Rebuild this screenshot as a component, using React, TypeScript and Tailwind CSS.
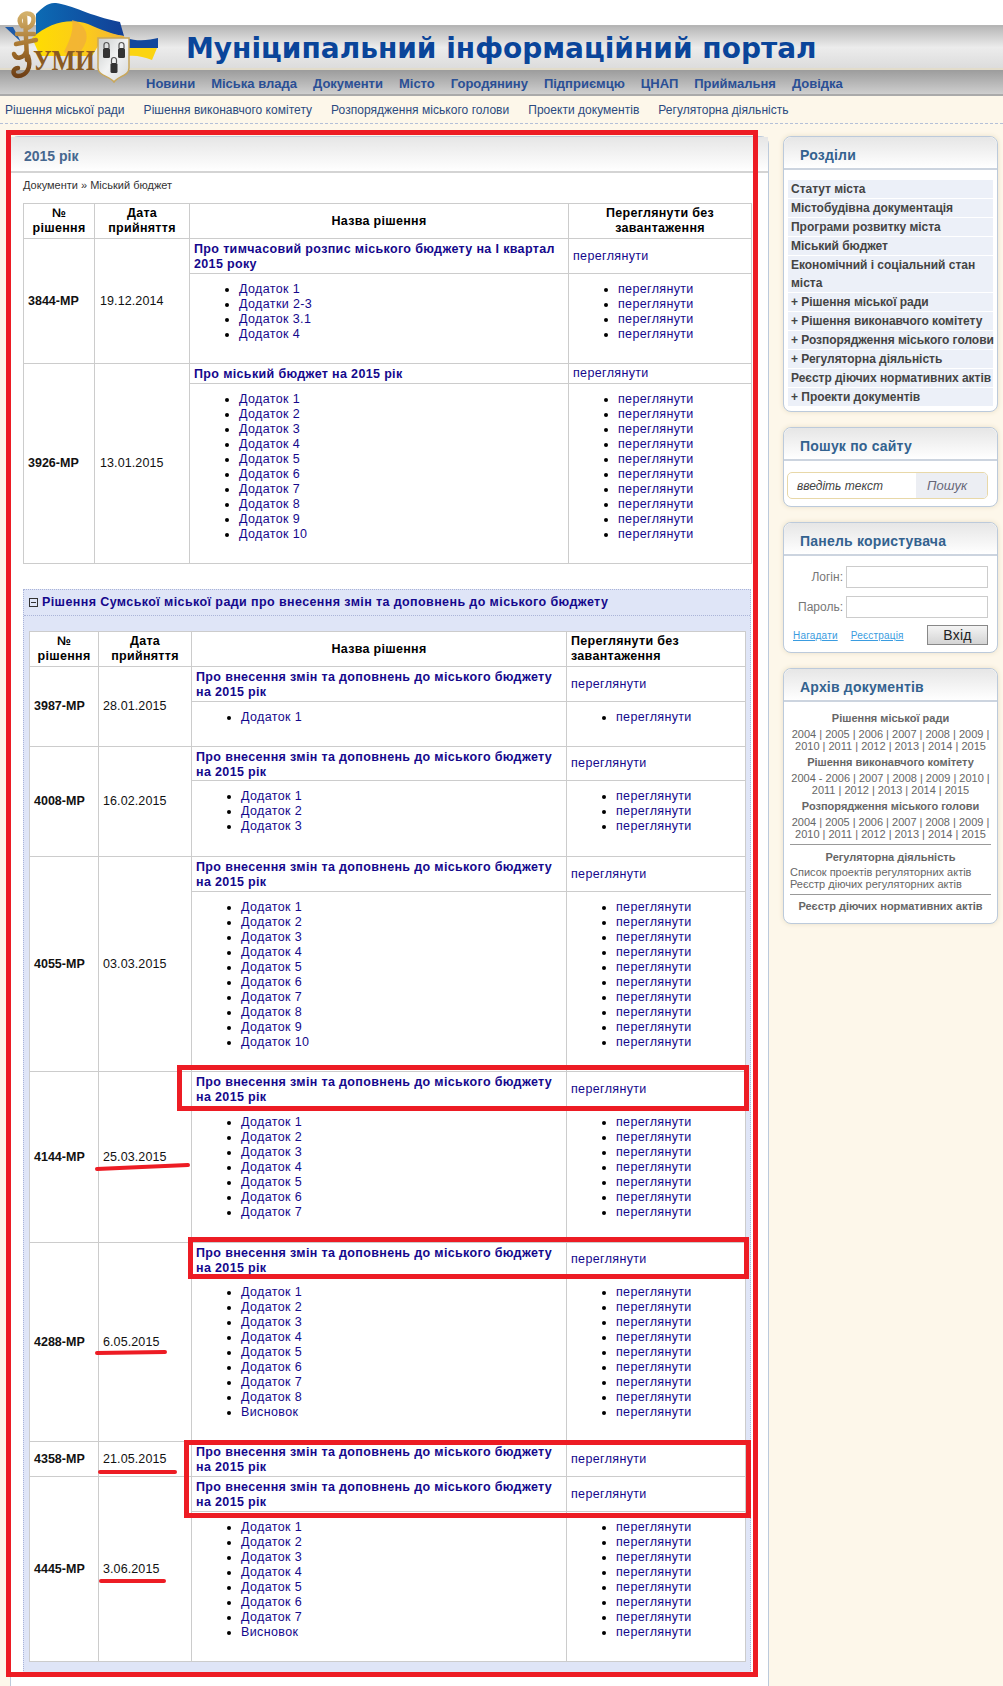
import React from "react";

const addons = (n: number) => Array.from({ length: n }, (_, i) => `Додаток ${i + 1}`);
const TITLE = "Про внесення змін та доповнень до міського бюджету на 2015 рік";

type Row = {
  no: string;
  date: string;
  title: string;
  titleH: number;
  subH?: number;
  items?: string[];
};

const budgetRows: Row[] = [
  {
    no: "3844-МР",
    date: "19.12.2014",
    title: "Про тимчасовий розпис міського бюджету на I квартал 2015 року",
    titleH: 35,
    subH: 90,
    items: ["Додаток 1", "Додатки 2-3", "Додаток 3.1", "Додаток 4"],
  },
  { no: "3926-МР", date: "13.01.2015", title: "Про міський бюджет на 2015 рік", titleH: 20, subH: 180, items: addons(10) },
];

const changeRows: Row[] = [
  { no: "3987-МР", date: "28.01.2015", title: TITLE, titleH: 35, subH: 45, items: addons(1) },
  { no: "4008-МР", date: "16.02.2015", title: TITLE, titleH: 34, subH: 76, items: addons(3) },
  { no: "4055-МР", date: "03.03.2015", title: TITLE, titleH: 35, subH: 180, items: addons(10) },
  { no: "4144-МР", date: "25.03.2015", title: TITLE, titleH: 35, subH: 136, items: addons(7) },
  { no: "4288-МР", date: "6.05.2015", title: TITLE, titleH: 34, subH: 165, items: [...addons(8), "Висновок"] },
  { no: "4358-МР", date: "21.05.2015", title: TITLE, titleH: 35 },
  { no: "4445-МР", date: "3.06.2015", title: TITLE, titleH: 35, subH: 150, items: [...addons(7), "Висновок"] },
];

function DocTable({ rows, widths, nested }: { rows: Row[]; widths: number[]; nested?: boolean }) {
  const cell = "border border-[#ccc]";
  return (
    <table className="table-fixed border-collapse bg-white text-[12.5px] leading-[15px] text-[#111]">
      <colgroup>
        {widths.map((w, i) => (
          <col key={i} style={{ width: w }} />
        ))}
      </colgroup>
      <thead>
        <tr className="h-[35px] text-center font-bold tracking-[0.3px] text-black">
          <th className={cell}>
            №
            <br />
            рішення
          </th>
          <th className={cell}>
            Дата
            <br />
            прийняття
          </th>
          <th className={cell}>Назва рішення</th>
          <th className={nested ? `${cell} pl-1 text-left` : cell}>Переглянути без завантаження</th>
        </tr>
      </thead>
      <tbody>
        {rows.map((r) => (
          <React.Fragment key={r.no}>
            <tr style={{ height: r.titleH }}>
              <td rowSpan={r.items ? 2 : 1} className={`${cell} pl-1 font-bold`}>
                {r.no}
              </td>
              <td rowSpan={r.items ? 2 : 1} className={`${cell} tracking-[0.1px] ${nested ? "pl-1" : "pl-[5px]"}`}>
                {r.date}
              </td>
              <td className={`${cell} px-1 pt-[3px] align-top font-bold tracking-[0.35px] text-[#14088c]`}>{r.title}</td>
              <td className={`${cell} pl-1 tracking-[0.35px] text-[#14088c]`}>переглянути</td>
            </tr>
            {r.items && (
              <tr style={{ height: r.subH }}>
                <td className={`${cell} pt-[8px] align-top`}>
                  <ul className="list-disc pl-[49px] tracking-[0.38px] text-[#14088c] marker:text-black">
                    {r.items.map((it, i) => (
                      <li key={i}>{it}</li>
                    ))}
                  </ul>
                </td>
                <td className={`${cell} pt-[8px] align-top`}>
                  <ul className="list-disc pl-[49px] tracking-[0.35px] text-[#14088c] marker:text-black">
                    {r.items.map((_, i) => (
                      <li key={i}>переглянути</li>
                    ))}
                  </ul>
                </td>
              </tr>
            )}
          </React.Fragment>
        ))}
      </tbody>
    </table>
  );
}

function Logo() {
  return (
    <svg className="absolute left-0 top-0" width="170" height="90" viewBox="0 0 170 90">
      <defs>
        <linearGradient id="gold" x1="0" y1="0" x2="0" y2="1">
          <stop offset="0" stopColor="#d3b06a" />
          <stop offset="0.55" stopColor="#a5722c" />
          <stop offset="1" stopColor="#6e3f16" />
        </linearGradient>
        <linearGradient id="yel" x1="0" y1="0" x2="1" y2="0">
          <stop offset="0" stopColor="#ffdd00" />
          <stop offset="0.6" stopColor="#fbc91e" />
          <stop offset="1" stopColor="#eeb13a" />
        </linearGradient>
        <linearGradient id="blu" x1="0" y1="0" x2="1" y2="0">
          <stop offset="0" stopColor="#0c6bb4" />
          <stop offset="1" stopColor="#123f96" />
        </linearGradient>
        <linearGradient id="shield" x1="0" y1="0" x2="1" y2="1">
          <stop offset="0" stopColor="#c9cccc" />
          <stop offset="0.5" stopColor="#f2f3f3" />
          <stop offset="1" stopColor="#d6d8d8" />
        </linearGradient>
      </defs>
      <path d="M5 27 L13 27 L21 42 Z" fill="#1d5aa8" />
      <path d="M36 14 C42 8 48 2 56 3 C72 5 90 16 120 22 L124 36 C100 34 72 18 36 36 Z" fill="url(#blu)" />
      <path d="M32 38 C50 22 70 18 88 24 C102 30 112 34 124 36 L128 48 L98 46 L92 56 L40 56 Z" fill="url(#yel)" />
      <path d="M72 20 C86 24 90 36 84 46 L78 56 L64 52 C70 40 74 30 72 20 Z" fill="#f0ad3c" opacity="0.75" />
      <path d="M126 38 C138 42 150 40 158 38 L158 48 L128 48 Z" fill="#12479c" />
      <path d="M128 48 L157 48 L152 60 C144 57 136 55 128 56 Z" fill="#fbd411" />
      <path
        d="M22 26 C16 18 24 12 30 14 C36 16 34 26 27 28 M25 16 L27 60 M17 34 L34 34 M16 44 L36 40 M14 54 C16 60 24 58 26 52 M28 56 C32 68 26 76 18 76 C12 76 12 68 18 68"
        fill="none"
        stroke="url(#gold)"
        strokeWidth="4.5"
        strokeLinecap="round"
      />
      <text x="33" y="70" fontFamily="Liberation Serif, serif" fontWeight="700" fontSize="30" fill="#8a5a22" textLength="62" lengthAdjust="spacingAndGlyphs">
        УМИ
      </text>
      <path d="M98 38 L129 38 L129 68 C129 76 118 76 114 82 C110 76 98 76 98 68 Z" fill="url(#shield)" stroke="#c9a75a" strokeWidth="1.5" />
      {[
        [106.5, 50],
        [121.5, 50],
        [114, 65],
      ].map(([x, y], i) => (
        <g key={i}>
          <path d={`M${x - 2.5} ${y - 2} V${y - 5} a2.5 2.5 0 0 1 5 0 V${y - 2}`} fill="none" stroke="#555" strokeWidth="1.2" />
          <rect x={x - 3.5} y={y - 2} width="7" height="10" rx="1.5" fill="#333" />
        </g>
      ))}
    </svg>
  );
}

function Card({ title, className, children }: { title: string; className: string; children: React.ReactNode }) {
  return (
    <div className={`rounded-[8px] border border-[#bccadb] bg-white shadow-[0_0_5px_#e8dfc8] ${className}`}>
      <div className="flex h-[33px] items-center rounded-t-[8px] border-b-2 border-[#ccd4df] bg-gradient-to-b from-[#e6e6e6] to-white pl-[16px] pt-[5px] text-[14px] font-bold tracking-[0.2px] text-[#33628f]">
        {title}
      </div>
      {children}
    </div>
  );
}

const sections = [
  "Статут міста",
  "Містобудівна документація",
  "Програми розвитку міста",
  "Міський бюджет",
  "Економічний і соціальний стан\nміста",
  "+ Рішення міської ради",
  "+ Рішення виконавчого комітету",
  "+ Розпорядження міського голови",
  "+ Регуляторна діяльність",
  "Реєстр діючих нормативних актів",
  "+ Проекти документів",
];

function ArchiveHead({ children }: { children: React.ReactNode }) {
  return <div className="text-center text-[11px] font-bold leading-[13px] text-[#666]">{children}</div>;
}

function Years({ lines }: { lines: string[] }) {
  return (
    <div className="mb-[4px] mt-[3px] text-center text-[11px] leading-[12px] text-[#666]">
      {lines.map((l) => (
        <div key={l}>{l}</div>
      ))}
    </div>
  );
}

function Sidebar() {
  return (
    <div className="ml-[14px] flex w-[215px] shrink-0 flex-col gap-[15px]">
      <Card title="Розділи" className="h-[276px]">
        <div className="mx-[4px] mt-[10px] flex flex-col gap-px whitespace-pre text-[12px] font-bold leading-[18px] tracking-[-0.03px] text-[#444]">
          {sections.map((s) => (
            <div key={s} className="bg-[#ecf0f8] pl-[3px]">
              {s}
            </div>
          ))}
        </div>
      </Card>
      <Card title="Пошук по сайту" className="h-[80px]">
        <div className="ml-[3px] mt-[11px] flex h-[27px] w-[201px] overflow-hidden rounded-[5px] border border-[#e8d8a8] text-[12px] italic">
          <div className="flex flex-1 items-center pl-[9px] text-[#444]">введіть текст</div>
          <div className="flex w-[71px] items-center bg-[#eceef3] pl-[11px] text-[13px] text-[#667]">Пошук</div>
        </div>
      </Card>
      <Card title="Панель користувача" className="h-[131px]">
        <div className="mt-[10px] flex flex-col gap-[8px] pr-[9px] text-[12px] text-[#777]">
          <div className="flex items-center justify-end gap-[3px]">
            Логін:
            <input className="h-[22px] w-[142px] border border-[#ccc] bg-white" />
          </div>
          <div className="flex items-center justify-end gap-[3px]">
            Пароль:
            <input className="h-[22px] w-[142px] border border-[#ccc] bg-white" />
          </div>
        </div>
        <div className="mt-[7px] flex items-center pl-[9px] pr-[9px] text-[10px] tracking-[0.2px]">
          <span className="text-[#3a9ce0] underline">Нагадати</span>
          <span className="ml-[13px] text-[#3a9ce0] underline">Реєстрація</span>
          <button className="ml-auto h-[20px] w-[61px] border border-[#888] bg-gradient-to-b from-[#f4f4f4] to-[#d4d4d4] text-[14px] leading-none text-[#222]">
            Вхід
          </button>
        </div>
      </Card>
      <Card title="Архів документів" className="h-[256px]">
        <div className="px-[6px] pt-[10px]">
          <ArchiveHead>Рішення міської ради</ArchiveHead>
          <Years lines={["2004 | 2005 | 2006 | 2007 | 2008 | 2009 |", "2010 | 2011 | 2012 | 2013 | 2014 | 2015"]} />
          <ArchiveHead>Рішення виконавчого комітету</ArchiveHead>
          <Years lines={["2004 - 2006 | 2007 | 2008 | 2009 | 2010 |", "2011 | 2012 | 2013 | 2014 | 2015"]} />
          <ArchiveHead>Розпорядження міського голови</ArchiveHead>
          <Years lines={["2004 | 2005 | 2006 | 2007 | 2008 | 2009 |", "2010 | 2011 | 2012 | 2013 | 2014 | 2015"]} />
          <div className="mt-[3px] border-t border-[#999] pt-[6px]">
            <ArchiveHead>Регуляторна діяльність</ArchiveHead>
            <div className="mt-[2px] text-[11px] leading-[12px] text-[#666]">
              <div>Список проектів регуляторних актів</div>
              <div>Реєстр діючих регуляторних актів</div>
            </div>
          </div>
          <div className="mt-[4px] border-t border-[#999] pt-[5px]">
            <ArchiveHead>Реєстр діючих нормативних актів</ArchiveHead>
          </div>
        </div>
      </Card>
    </div>
  );
}

const frames = [
  "left-[6px] top-[130px] h-[1547px] w-[752px]",
  "left-[177px] top-[1065px] h-[46px] w-[572px]",
  "left-[188px] top-[1237px] h-[42px] w-[561px]",
  "left-[184px] top-[1440px] h-[78px] w-[567px]",
];

export default function App() {
  return (
    <div className="relative h-[1686px] w-[1003px] overflow-hidden bg-[#fdf7ea] font-['Liberation_Sans',Arial,sans-serif]">
      <div className="h-[25px] bg-white" />
      <div className="flex h-[45px] items-center border-t-2 border-b-2 border-t-[#b5b5b5] border-b-[#e2dccb] bg-gradient-to-b from-[#b9b9b9] via-[#ececec] to-[#dcdcdc] pl-[186px] pt-[3px] font-['DejaVu_Sans',sans-serif] text-[28px] font-bold leading-none text-[#0a459a]">
        Муніципальний інформаційний портал
      </div>
      <div className="flex h-[26px] items-center gap-[16px] border-b-2 border-[#aaa] bg-gradient-to-b from-[#9c9c9c] to-[#cfcfcf] pl-[146px] pt-[3px] text-[13px] font-bold text-[#2a4f95]">
        {["Новини", "Міська влада", "Документи", "Місто", "Городянину", "Підприємцю", "ЦНАП", "Приймальня", "Довідка"].map((n) => (
          <span key={n}>{n}</span>
        ))}
      </div>
      <div className="flex h-[28px] items-center gap-[19px] border-b border-dashed border-[#b4c0d8] pl-[5px] text-[12px] tracking-[0.03px] text-[#2b4a80]">
        {["Рішення міської ради", "Рішення виконавчого комітету", "Розпорядження міського голови", "Проекти документів", "Регуляторна діяльність"].map((n) => (
          <span key={n}>{n}</span>
        ))}
      </div>

      <div className="flex pl-[10px] pt-[12px]">
        <div className="h-[1600px] w-[759px] shrink-0 rounded-t-[8px] border border-[#bccadb] bg-white">
          <div className="flex h-[36px] items-center border-b-2 border-[#d4d4d4] bg-gradient-to-b from-[#e6e6e6] to-white pl-[13px] pt-[5px] text-[14px] font-bold text-[#46678f]">
            2015 рік
          </div>
          <div className="pl-[12px] pt-[5px] text-[11px] leading-[15px] text-[#333]">Документи » Міський бюджет</div>
          <div className="pl-[12px] pt-[10px]">
            <DocTable rows={budgetRows} widths={[71, 95, 379, 183]} />
          </div>
          <div className="ml-[12px] mt-[25px] w-[728px] border border-dotted border-[#aab4d8] bg-[#dfe5f7] pb-[10px]">
            <div className="flex h-[26px] items-center gap-[4px] border-b border-dotted border-[#aab4d8] pl-[5px] text-[12.5px] font-bold tracking-[0.4px] text-[#14088c]">
              <span className="relative h-[9px] w-[9px] border border-[#333]">
                <span className="absolute left-[1px] top-[3px] h-px w-[5px] bg-[#333]" />
              </span>
              Рішення Сумської міської ради про внесення змін та доповнень до міського бюджету
            </div>
            <div className="pl-[5px] pt-[15px]">
              <DocTable rows={changeRows} widths={[69, 93, 375, 179]} nested />
            </div>
          </div>
        </div>
        <Sidebar />
      </div>

      <Logo />

      {frames.map((f) => (
        <div key={f} className={`pointer-events-none absolute border-[5px] border-[#ed1c24] ${f}`} />
      ))}
      <svg className="pointer-events-none absolute left-0 top-0" width="1003" height="1686" fill="none" stroke="#ed1c24" strokeWidth="4" strokeLinecap="round">
        <path d="M97 1169 L142 1167 L188 1165" />
        <path d="M97 1353 L165 1352" />
        <path d="M100 1472 L175 1472" />
        <path d="M101 1581 L164 1581" />
      </svg>
    </div>
  );
}
